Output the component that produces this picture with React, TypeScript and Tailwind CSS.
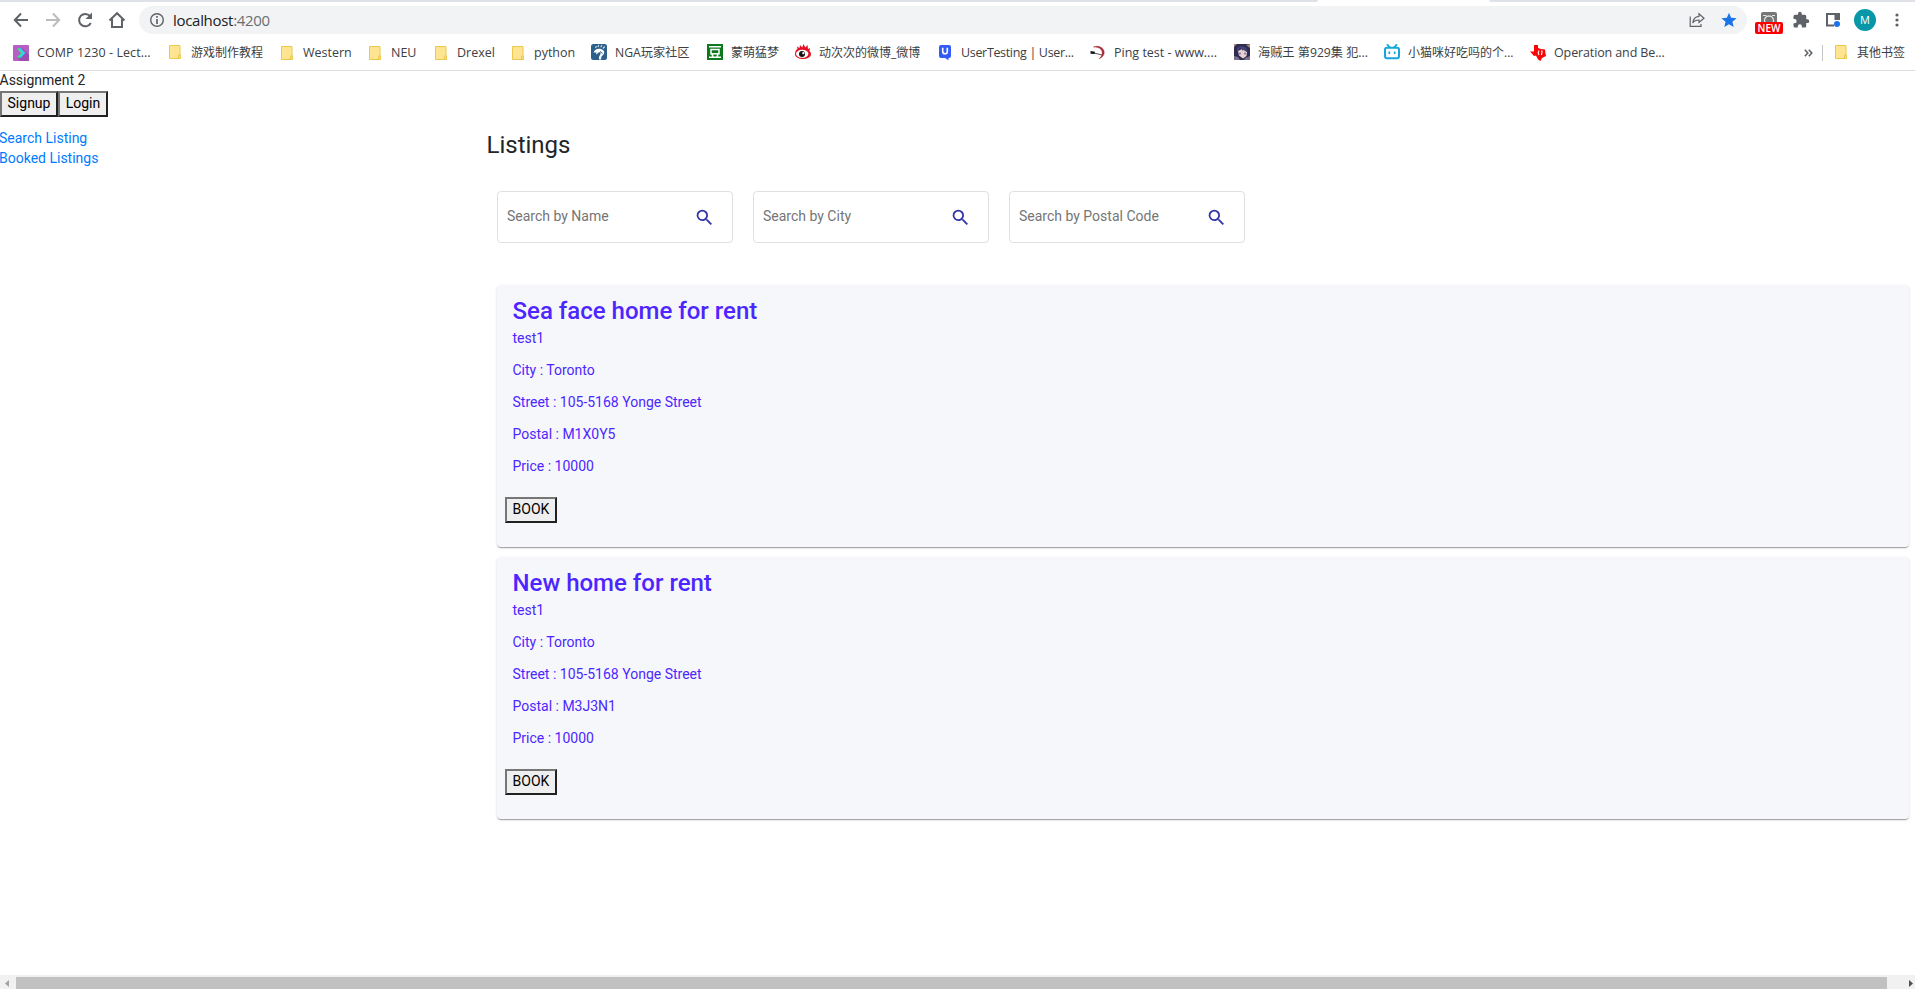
import type { ReactNode } from "react";

const Folder = () => (
  <svg width="16" height="16" viewBox="0 0 16 16">
    <path d="M2.500 1.500h10.500v9.500h.5v3.500h-11z" fill="#ffe591" stroke="#ecc84f" />
    <path d="M11.500 14V11.200h2V14z" fill="#ffe591" stroke="#ecc84f" />
  </svg>
);

const Lecture = () => (
  <svg width="16" height="16" viewBox="0 0 16 16">
    <rect width="16" height="16" rx="1" fill="#b55fc6" />
    <path d="M9 3l7 7v6H7l-2-3z" fill="#9c4db0" />
    <path d="M5 3.500L9 8l-4 4.500" fill="none" stroke="#4be36b" strokeWidth="1.800" />
    <path d="M6.500 3.500L11 8l-4.500 4.500" fill="none" stroke="#2bd5f4" strokeWidth="2" />
  </svg>
);

const Nga = () => (
  <svg width="16" height="16" viewBox="0 0 16 16">
    <rect width="16" height="16" rx="2.500" fill="#2d5f8b" />
    <path d="M2.500 8.500C3.500 5.500 7 4 10.500 5.200c3 1 3.500 4 1.500 5.800-1.200 1-2 1.800-1.800 4.500H8c-.2-2 0-3.300 1-4.500 1-1.300.8-2.600-.5-2.800-1.500-.2-1.700 2-3.500 2.300L5.500 8.500z" fill="#fff" />
    <path d="M9 7.500l2.500 2" stroke="#2d5f8b" strokeWidth="1" />
    <path d="M4.500 4l1-2M7 3.200l.7-2.400M9.700 3.300L11 1M12 4.500L13.800 2.500" stroke="#c5d5e3" strokeWidth="1.200" />
  </svg>
);

const Douban = () => (
  <svg width="16" height="16" viewBox="0 0 16 16">
    <rect width="16" height="16" fill="#0b7a1c" />
    <path d="M2 2.700h12M2 13.300h12M5 10l1 3M11 10l-1 3" stroke="#fff" strokeWidth="1.500" />
    <rect x="4" y="5.500" width="8" height="4.300" fill="none" stroke="#fff" strokeWidth="1.500" />
  </svg>
);

const Weibo = () => (
  <svg width="16" height="16" viewBox="0 0 16 16">
    <path d="M0 10C0 7 1.500 5.500 2.500 5L2 2.500 4.500 4 5 1l2.200 2.500L8.500 0l1.800 3.500L12.500 1l.5 4 2-1-.5 3c1 1 1.500 2 1.500 3 0 3.500-4 5-8 5s-8-1.500-8-5z" fill="#e3101f" />
    <ellipse cx="7.200" cy="9.800" rx="6.200" ry="4" fill="#fff" />
    <circle cx="7" cy="10" r="3" fill="#151515" />
    <circle cx="8.300" cy="9.200" r="1.100" fill="#fff" />
  </svg>
);

const UserTesting = () => (
  <svg width="16" height="16" viewBox="0 0 16 16">
    <path d="M4 0h6a2 2 0 0 1 2 2v9a2 2 0 0 1-2 2h-.5v2.200L6 13H2a2 2 0 0 1-2-2V2a2 2 0 0 1 2-2z" transform="translate(2 0)" fill="#335cf7" />
    <path d="M5.700 2.800v3.700a2.300 2.300 0 0 0 4.600 0V2.800" fill="none" stroke="#fff" strokeWidth="1.600" />
  </svg>
);

const Ping = () => (
  <svg width="16" height="16" viewBox="0 0 16 16">
    <path d="M3.500 2C9 0 14 3 14.200 7.500c0 2.500-1.700 5-5 6.300 2-2 3.200-3.800 3-6.300C12 4 9 1.800 3.500 2z" fill="#a72935" stroke="#a72935" strokeWidth=".5" />
    <path d="M2 7.500L12 10" stroke="#555" strokeWidth="1" />
    <path d="M.5 6l4.500.8L4.500 9 .5 8.800z" fill="#151515" />
  </svg>
);

const Portrait = () => (
  <svg width="16" height="16" viewBox="0 0 16 16">
    <rect width="16" height="16" fill="#2e2c50" />
    <path d="M0 0h3L0 3zM12 1l4-1v4z" fill="#a68d76" />
    <path d="M4 7l4-2 5 3-.5 4L9 14.500l-4-3z" fill="#ead3cf" />
    <path d="M3 8l3-4.500 3 3.500.5-2L14 9l-2-5.500-5-1.500L3 4z" fill="#46427a" />
    <path d="M6 8.500v2M11 8.500v2" stroke="#5960ab" strokeWidth="1.300" />
    <path d="M0 12l4 1 2 3H0zM11 14l5-2v4h-6z" fill="#777189" />
  </svg>
);

const Bilibili = () => (
  <svg width="16" height="16" viewBox="0 0 16 16">
    <path d="M3.500.8l2 2.200M12.500.8l-2 2.200" stroke="#16a5df" strokeWidth="1.800" strokeLinecap="round" />
    <rect x="1" y="3.700" width="14" height="10.600" rx="2" fill="#fff" stroke="#16a5df" strokeWidth="2" />
    <path d="M5.300 7.500v2.500M10.700 7.500v2.500" stroke="#16a5df" strokeWidth="1.700" />
  </svg>
);

const Texas = () => (
  <svg width="16" height="16" viewBox="0 0 16 16">
    <path d="M4 0h4v3l3 1 4 .5.500 4L16 11l-4 2-1.500 3-2.500-1.500L6 10.500l-2 .5L0 6.500h4z" fill="#f80606" />
    <path d="M9 5.500c-1 1.500-1 3 0 4.500M11.500 5.500c1.500 1.500 0 2 0 4.500" fill="none" stroke="#fff" strokeWidth="1.100" />
  </svg>
);

type Bookmark = { icon: ReactNode; label: string; cls: string };

const bookmarks: Bookmark[] = [
  { icon: <Lecture />, label: "COMP 1230 - Lect...", cls: "w-[154px] tracking-[0.060px]" },
  { icon: <Folder />, label: "游戏制作教程", cls: "w-[112px] text-[12px]" },
  { icon: <Folder />, label: "Western", cls: "w-[88px]" },
  { icon: <Folder />, label: "NEU", cls: "w-[66px]" },
  { icon: <Folder />, label: "Drexel", cls: "w-[77px]" },
  { icon: <Folder />, label: "python", cls: "w-[81px]" },
  { icon: <Nga />, label: "NGA玩家社区", cls: "w-[116px] text-[12.200px]" },
  { icon: <Douban />, label: "蒙萌猛梦", cls: "w-[88px] text-[12px]" },
  { icon: <Weibo />, label: "动次次的微博_微博", cls: "w-[142px] text-[12px]" },
  { icon: <UserTesting />, label: "UserTesting | User...", cls: "w-[153px] tracking-[-0.330px]" },
  { icon: <Ping />, label: "Ping test - www....", cls: "w-[144px]" },
  { icon: <Portrait />, label: "海贼王 第929集 犯...", cls: "w-[150px] text-[12.200px]" },
  { icon: <Bilibili />, label: "小猫咪好吃吗的个...", cls: "w-[146px] text-[12px]" },
  { icon: <Texas />, label: "Operation and Be...", cls: "w-[160px] tracking-[-0.120px]" },
];

const uiFont = "font-['Open_Sans','Noto_Sans_CJK_SC',sans-serif]";

function Toolbar() {
  return (
    <div className="flex h-8 shrink-0 items-center pt-1">
      <svg className="ml-3 shrink-0" width="18" height="18" viewBox="0 0 18 18" fill="none" stroke="#5f6368" strokeWidth="2">
        <path d="M16 9H3.500M9 2.500L2.800 9 9 15.500" />
      </svg>
      <svg className="ml-[14px] shrink-0" width="18" height="18" viewBox="0 0 18 18" fill="none" stroke="#babcbe" strokeWidth="2">
        <path d="M2 9h12.500M9 2.500L15.200 9 9 15.500" />
      </svg>
      <svg className="ml-[14px] shrink-0" width="18" height="18" viewBox="0 0 18 18">
        <path d="M14.800 12A6.200 6.200 0 1 1 14 5" fill="none" stroke="#5f6368" strokeWidth="2" />
        <path d="M16 1.500V8H9.500z" fill="#5f6368" />
      </svg>
      <svg className="ml-[14px] shrink-0" width="18" height="18" viewBox="0 0 18 18" fill="none" stroke="#5f6368" strokeWidth="2">
        <path d="M1.500 9.500L9 2.200l7.500 7.300M4 8v8h10V8" />
      </svg>
      <div className="ml-[13px] flex h-7 w-[1608px] shrink-0 items-center rounded-full bg-[#f1f3f4]">
        <svg className="ml-[10px]" width="16" height="16" viewBox="0 0 16 16">
          <circle cx="8" cy="8" r="6.300" fill="none" stroke="#5f6368" strokeWidth="1.400" />
          <path d="M8 4v1.700M8 7v5" stroke="#5f6368" strokeWidth="1.700" />
        </svg>
        <div className="ml-2 pb-px text-[15px] leading-[26px] tracking-[-0.300px] text-[#202124]">
          localhost<span className="text-[#6a6e73]">:4200</span>
        </div>
        <svg className="ml-auto" width="16" height="16" viewBox="0 0 16 16" fill="none" stroke="#5f6368" strokeWidth="1.200">
          <path d="M1.200 4.500v9.800H12V12M10 1.800L15 6.200l-5 4.300V8C7 8 5 9 3.800 11 4 7.500 6 4.700 10 4.300z" />
        </svg>
        <svg className="mr-[10px] ml-[16px]" width="16" height="16" viewBox="0 0 16 16">
          <path d="M8 .8l2.100 5 5.500.4-4.200 3.600 1.300 5.300L8 12.200l-4.700 2.900 1.300-5.300L.4 6.200l5.500-.4z" fill="#1a73e8" />
        </svg>
      </div>
      <div className="relative ml-[8px] h-7 w-7 shrink-0">
        <svg className="absolute top-[6px] left-[6px]" width="16" height="12" viewBox="0 0 16 12">
          <rect width="16" height="12" rx="2" fill="#767676" />
          <circle cx="8" cy="8.500" r="4.500" fill="none" stroke="#e4e4e4" strokeWidth="1.300" />
          <path d="M2 3.500h3.500M11 3.500h3" stroke="#e4e4e4" />
        </svg>
        <div className="absolute top-4 left-0 h-3 w-7 rounded-[2px] bg-[#f90000] text-center font-['Open_Sans',sans-serif] text-[10px] leading-3 font-semibold text-white">
          NEW
        </div>
      </div>
      <svg className="ml-[9px] shrink-0" width="18" height="18" viewBox="0 0 24 24">
        <path d="M20.500 11H19V7a2 2 0 0 0-2-2h-4V3.500a2.500 2.500 0 0 0-5 0V5H4a2 2 0 0 0-2 2v3.800h1.500a2.700 2.700 0 0 1 0 5.400H2V20a2 2 0 0 0 2 2h3.800v-1.500a2.700 2.700 0 0 1 5.400 0V22H17a2 2 0 0 0 2-2v-4h1.500a2.500 2.500 0 0 0 0-5z" fill="#5f6368" />
      </svg>
      <svg className="ml-[15px] shrink-0" width="16" height="16" viewBox="0 0 16 16">
        <path d="M1 2h13v5M2 1v12.500h7" fill="none" stroke="#5f6368" strokeWidth="2" />
        <path d="M9.500 1H15v7H9.500z" fill="#5f6368" />
        <circle cx="12" cy="12" r="3" fill="#1a73e8" />
      </svg>
      <div className="ml-[13px] flex h-[22px] w-[22px] shrink-0 items-center justify-center rounded-full bg-[#0797a7] text-[11px] text-white">M</div>
      <svg className="ml-[19px]" width="4" height="16" viewBox="0 0 4 16" fill="#5f6368">
        <circle cx="2" cy="3" r="1.600" />
        <circle cx="2" cy="8" r="1.600" />
        <circle cx="2" cy="13" r="1.600" />
      </svg>
    </div>
  );
}

function BookmarkBar() {
  return (
    <div className="flex h-9 items-center border-b border-[#dadce0] pl-[13px] text-[12.500px] text-[#3c4043]">
      {bookmarks.map((b) => (
        <div key={b.label} className={`flex shrink-0 items-center gap-2 whitespace-nowrap ${b.cls}`}>
          <span className="shrink-0">{b.icon}</span>
          <span>{b.label}</span>
        </div>
      ))}
      <svg className="ml-[114px]" width="9" height="8" viewBox="0 0 9 8" fill="none" stroke="#5f6368" strokeWidth="1.600">
        <path d="M.8.800L3.800 4l-3 3.200M4.800.8L7.800 4l-3 3.200" />
      </svg>
      <div className="ml-[9px] h-4 w-px bg-[#c4c7ca]" />
      <div className="ml-[10px] flex items-center gap-2 text-[12px] whitespace-nowrap">
        <Folder />
        <span>其他书签</span>
      </div>
    </div>
  );
}

function NativeButton({ children, className }: { children: ReactNode; className: string }) {
  return (
    <button
      className={`flex h-[26px] items-center justify-center border-2 border-t-[#767676] border-r-[#212121] border-b-[#212121] border-l-[#767676] bg-[#efefef] pb-[2px] text-sm text-black ${className}`}
    >
      {children}
    </button>
  );
}

function SearchBox({ label }: { label: string }) {
  return (
    <div className="flex h-[52px] w-[236px] items-center rounded-[4px] border border-[#e0e0e0] pl-[9px]">
      <input placeholder={label} className="mb-[2px] h-5 w-[187px] text-sm outline-none placeholder:text-[#757575]" />
      <svg width="21" height="21" viewBox="0 0 24 24" fill="#3033a6">
        <path d="M15.500 14h-.79l-.28-.27A6.471 6.471 0 0 0 16 9.500 6.500 6.500 0 1 0 9.500 16c1.610 0 3.090-.59 4.230-1.570l.27.28v.79l5 4.990L20.490 19l-4.990-5zm-6 0C7.010 14 5 11.990 5 9.500S7.010 5 9.500 5 14 7.010 14 9.500 11.990 14 9.500 14z" />
      </svg>
    </div>
  );
}

type Listing = { title: string; user: string; city: string; street: string; postal: string; price: number };

const listings: Listing[] = [
  { title: "Sea face home for rent", user: "test1", city: "Toronto", street: "105-5168 Yonge Street", postal: "M1X0Y5", price: 10000 },
  { title: "New home for rent", user: "test1", city: "Toronto", street: "105-5168 Yonge Street", postal: "M3J3N1", price: 10000 },
];

function ListingCard({ item }: { item: Listing }) {
  return (
    <article className="h-[262px] rounded-[4px] bg-[#f5f7fb] pt-[10px] pl-2 text-[#4d26ff] shadow-[0px_2px_1px_-1px_rgba(0,0,0,0.2),0px_1px_1px_0px_rgba(0,0,0,0.14),0px_1px_3px_0px_rgba(0,0,0,0.12)]">
      <div className="pl-[7.500px]">
        <h2 className="text-[24px] leading-8 font-medium">{item.title}</h2>
        <div className="flex flex-col gap-3 pt-px text-sm leading-5">
          <p>{item.user}</p>
          <p>City : {item.city}</p>
          <p>Street : {item.street}</p>
          <p>Postal : {item.postal}</p>
          <p>Price : {item.price}</p>
        </div>
      </div>
      <NativeButton className="mt-[21px] w-[52px]">BOOK</NativeButton>
    </article>
  );
}

export default function App() {
  return (
    <div className="flex h-[989px] w-[1915px] flex-col overflow-hidden bg-white font-['Roboto',sans-serif] text-sm text-[#212529]">
      <header className={`shrink-0 ${uiFont}`}>
        <div className="flex h-[2px] justify-between">
          <div className="w-[1318px] rounded-br-[2px] bg-[#dee1e6]" />
          <div className="w-[426px] rounded-bl-[2px] bg-[#dee1e6]" />
        </div>
        <Toolbar />
        <div className="pt-px">
          <BookmarkBar />
        </div>
      </header>
      <main className="flex min-h-0 flex-1">
        <aside className="w-[487px] shrink-0">
          <div className="-ml-[0.500px] h-5 leading-[19px]">Assignment 2</div>
          <div className="flex">
            <NativeButton className="w-[58px]">Signup</NativeButton>
            <NativeButton className="w-[50px]">Login</NativeButton>
          </div>
          <nav className="mt-[11px] -ml-px flex flex-col leading-5 text-[#007bff]">
            <a>Search Listing</a>
            <a>Booked Listings</a>
          </nav>
        </aside>
        <section className="flex-1 pt-[58px]">
          <h1 className="-ml-[0.500px] text-[24px] leading-8">Listings</h1>
          <div className="mt-[30px] ml-[10px] flex gap-5">
            <SearchBox label="Search by Name" />
            <SearchBox label="Search by City" />
            <SearchBox label="Search by Postal Code" />
          </div>
          <div className="mt-[42px] mr-[6px] ml-[10px] flex flex-col gap-[10px]">
            {listings.map((item) => (
              <ListingCard key={item.postal} item={item} />
            ))}
          </div>
        </section>
      </main>
      <footer className="flex h-[14px] shrink-0 items-end bg-[#f1f1f1]">
        <svg width="16" height="12" viewBox="0 0 16 12" fill="#a3a3a3">
          <path d="M9 3v7L5 6.500z" />
        </svg>
        <div className="h-3 w-[1871px] bg-[#c1c1c1]" />
        <svg className="ml-auto" width="8" height="12" viewBox="0 0 8 12" fill="#505050">
          <path d="M2 3v7l4-3.500z" />
        </svg>
      </footer>
    </div>
  );
}
